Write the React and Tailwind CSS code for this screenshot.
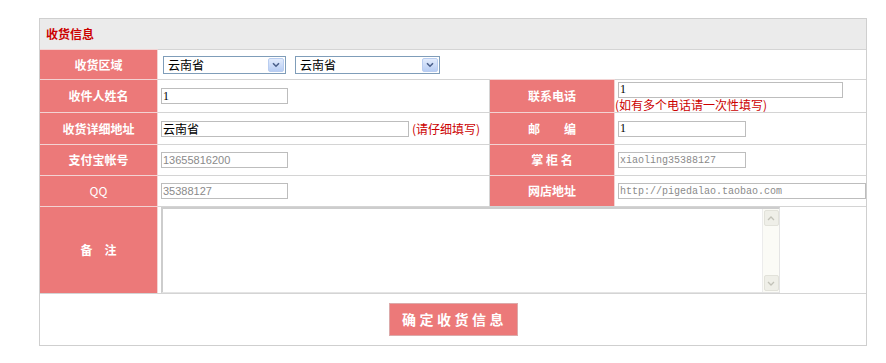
import React from 'react';

const cjk = "font-['Noto_Sans_CJK_SC','Noto_Sans',sans-serif]";

// pink label cell
const Label = ({ children, className = '' }) => (
  <div className={`flex items-center justify-center bg-[#ec7979] text-white font-bold text-[12px] leading-none border-t border-[#f3d3d3] ${className}`}>
    {children}
  </div>
);

// white value cell
const Cell = ({ children, className = '' }) => (
  <div className={`flex bg-white border-t border-[#d4d4d4] ${className}`}>
    {children}
  </div>
);

const Field = ({ value, width, tone = 'dark', font = 'serif' }) => {
  const fonts = {
    serif: "font-['Liberation_Serif',serif] text-[12px]",
    cjk: `${cjk} text-[12px]`,
    sans: "font-['Liberation_Sans',sans-serif] text-[11px]",
    mono: "font-['Liberation_Mono',monospace] text-[10px]",
  };
  return (
    <input
      readOnly
      defaultValue={value}
      style={{ width }}
      className={`block h-[16px] border border-[#bdbdbd] bg-white px-[1px] py-0 leading-none outline-none ${fonts[font]} ${tone === 'dark' ? 'text-black' : 'text-[#8a8a8a]'}`}
    />
  );
};

const Select = ({ width }) => (
  <div style={{ width }} className="flex h-[18px] items-center border border-[#7f9db9] bg-white pl-[4px] pr-[1px]">
    <span className={`flex-1 text-[12px] leading-none text-black ${cjk}`}>云南省</span>
    <span className="flex h-[14px] w-[16px] items-center justify-center rounded-[2px] border border-[#b9cdf0] bg-gradient-to-b from-[#e2ebfc] to-[#b8cdf4]">
      <svg width="8" height="6" viewBox="0 0 8 6">
        <path d="M1 1.2 L4 4.2 L7 1.2" fill="none" stroke="#4a5f8a" strokeWidth="1.6" />
      </svg>
    </span>
  </div>
);

const Chevron = ({ up }) => (
  <span className="flex h-[16px] w-[15px] items-center justify-center rounded-[2px] border border-[#e2e2da] bg-[#efefe8]">
    <svg width="8" height="5" viewBox="0 0 8 5">
      <path d={up ? 'M1 4 L4 1 L7 4' : 'M1 1 L4 4 L7 1'} fill="none" stroke="#c2c2b8" strokeWidth="1.3" />
    </svg>
  </span>
);

export default function App() {
  return (
    <div className={`min-h-screen bg-white pt-[18px] pl-[39px] ${cjk}`}>
      <div className="w-[828px] border border-[#cfcfcf]">
        {/* header */}
        <div className="flex h-[30px] items-center bg-[#ebebeb] pl-[6px] text-[12px] font-bold text-[#cc0000]">
          收货信息
        </div>

        {/* row 1 */}
        <div className="flex h-[30px]">
          <Label className="w-[118px] border-r border-r-[#f3d3d3]">收货区域</Label>
          <Cell className="flex-1 items-center gap-[9px] pl-[5px]">
            <Select width={123} />
            <Select width={145} />
          </Cell>
        </div>

        {/* row 2 */}
        <div className="flex h-[33px]">
          <Label className="w-[118px] border-r border-r-[#f3d3d3]">收件人姓名</Label>
          <Cell className="w-[332px] items-center pl-[3px] border-r border-r-[#d4d4d4]">
            <Field value="1" width={127} />
          </Cell>
          <Label className="w-[125px] border-r border-r-[#f3d3d3]">联系电话</Label>
          <Cell className="flex-1 flex-col justify-center">
            <div className="flex pl-[3px]">
              <Field value="1" width={225} />
            </div>
            <span className="text-[12px] leading-[13px] text-[#cc0000]">(如有多个电话请一次性填写)</span>
          </Cell>
        </div>

        {/* row 3 */}
        <div className="flex h-[32px]">
          <Label className="w-[118px] border-r border-r-[#f3d3d3]">收货详细地址</Label>
          <Cell className="w-[332px] items-center gap-[3px] pl-[3px] border-r border-r-[#d4d4d4]">
            <Field value="云南省" width={248} font="cjk" />
            <span className="text-[12px] text-[#cc0000]">(请仔细填写)</span>
          </Cell>
          <Label className="w-[125px] border-r border-r-[#f3d3d3]">邮　　编</Label>
          <Cell className="flex-1 items-center pl-[3px]">
            <Field value="1" width={128} />
          </Cell>
        </div>

        {/* row 4 */}
        <div className="flex h-[31px]">
          <Label className="w-[118px] border-r border-r-[#f3d3d3]">支付宝帐号</Label>
          <Cell className="w-[332px] items-center pl-[3px] border-r border-r-[#d4d4d4]">
            <Field value="13655816200" width={127} tone="light" font="sans" />
          </Cell>
          <Label className="w-[125px] border-r border-r-[#f3d3d3]">掌 柜 名</Label>
          <Cell className="flex-1 items-center pl-[3px]">
            <Field value="xiaoling35388127" width={128} tone="light" font="mono" />
          </Cell>
        </div>

        {/* row 5 */}
        <div className="flex h-[31px]">
          <Label className="w-[118px] border-r border-r-[#f3d3d3] font-normal">QQ</Label>
          <Cell className="w-[332px] items-center pl-[3px] border-r border-r-[#d4d4d4]">
            <Field value="35388127" width={127} tone="light" font="sans" />
          </Cell>
          <Label className="w-[125px] border-r border-r-[#f3d3d3]">网店地址</Label>
          <Cell className="flex-1 items-center overflow-hidden pl-[3px]">
            <Field value="http://pigedalao.taobao.com" width={248} tone="light" font="mono" />
          </Cell>
        </div>

        {/* row 6 */}
        <div className="flex h-[87px]">
          <Label className="w-[118px] border-r border-r-[#f3d3d3]">备　注</Label>
          <div className="flex flex-1 items-stretch border-t border-[#d4d4d4] pl-[3px]">
            <div className="flex w-[619px] border-l-2 border-t-2 border-[#cdcdcd] border-r border-b border-r-[#e4e4e4] border-b-[#e4e4e4]">
              <div className="flex-1" />
              <div className="flex w-[17px] flex-col items-center justify-between border-l border-[#ececec] bg-[#fbfbf6] py-[1px]">
                <Chevron up />
                <Chevron />
              </div>
            </div>
          </div>
        </div>

        {/* submit */}
        <div className="flex h-[52px] items-center justify-center border-t border-[#d4d4d4]">
          <button className="h-[33px] w-[129px] border border-[#dcaaaa] bg-[#ec7979] pl-[3px] text-[14px] font-bold tracking-[3.5px] text-white">
            确定收货信息
          </button>
        </div>
      </div>
    </div>
  );
}
